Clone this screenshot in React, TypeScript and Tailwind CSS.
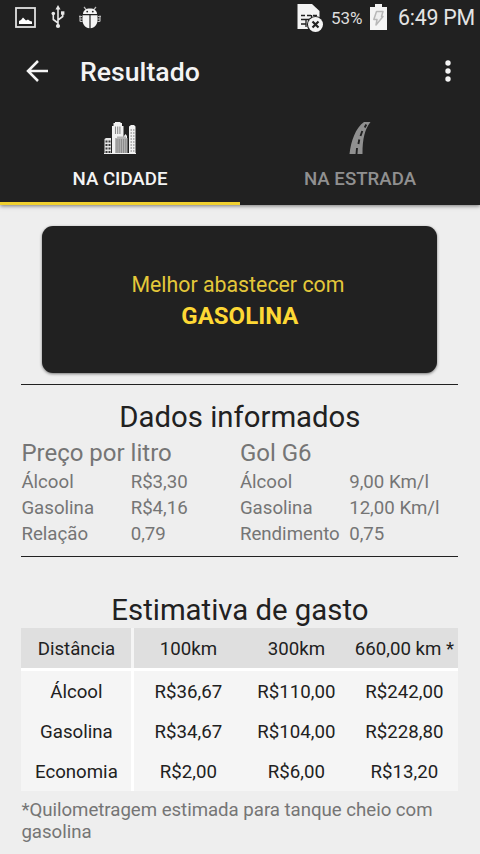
import { ReactNode } from "react";

const prices = [
  { label: "Álcool", value: "R$3,30" },
  { label: "Gasolina", value: "R$4,16" },
  { label: "Relação", value: "0,79" },
];

const consumption = [
  { label: "Álcool", value: "9,00 Km/l" },
  { label: "Gasolina", value: "12,00 Km/l" },
  { label: "Rendimento", value: "0,75" },
];

const distances = ["100km", "300km", "660,00 km *"];

const estimates = [
  { label: "Álcool", values: ["R$36,67", "R$110,00", "R$242,00"] },
  { label: "Gasolina", values: ["R$34,67", "R$104,00", "R$228,80"] },
  { label: "Economia", values: ["R$2,00", "R$6,00", "R$13,20"] },
];

function PictureIcon() {
  return (
    <svg width="21" height="21" viewBox="0 0 21 21">
      <rect x="1" y="1" width="19" height="19" fill="none" stroke="#e0e0e0" strokeWidth="1.800" />
      <path d="M4 17v-3l2-1 2-2.500 3 3 2-1 2 1.500 2 .5v2.500z" fill="#fff" />
    </svg>
  );
}

function UsbIcon() {
  return (
    <svg width="14" height="24" viewBox="0 0 14 24" fill="none" stroke="#e8e8e8" strokeWidth="1.600">
      <path d="M7 3v18M7 18L2.300 14.500V8.500M7 15l4.700-3.500V8" />
      <path d="M7 0l2.500 4.500h-5z" fill="#e8e8e8" stroke="none" />
      <circle cx="7" cy="21" r="2.100" fill="#e8e8e8" stroke="none" />
      <circle cx="2.300" cy="8.500" r="1.800" fill="#e8e8e8" stroke="none" />
      <path d="M10 6.300h3.400v3.400H10z" fill="#e8e8e8" stroke="none" />
    </svg>
  );
}

function BugIcon() {
  return (
    <svg width="24" height="23" viewBox="0 0 24 23">
      <path
        d="M6 1l2.500 3M18 1l-2.500 3M1 10.500h3M2 13h2.500M2 15.500h2.500M20 10.500h3M19.500 13H22M19.500 15.500H22M2 9.500v6M22 9.500v6"
        stroke="#b8b8b8"
        strokeWidth="1.200"
        fill="none"
      />
      <path d="M5 8C5 4.500 8 2.500 12 2.500S19 4.500 19 8z" fill="#f4f4f4" />
      <path d="M4.500 9.200h6.900v13C7.500 22 4.500 18.500 4.500 14zM12.600 9.200h6.900V14c0 4.500-3 8-6.900 8.200z" fill="#f4f4f4" />
      <circle cx="9.200" cy="5.600" r=".9" fill="#212121" />
      <circle cx="14.800" cy="5.600" r=".9" fill="#212121" />
    </svg>
  );
}

function SimIcon() {
  return (
    <svg width="27" height="30" viewBox="0 0 27 30">
      <path d="M.5 0h14.500l7.500 7v18H.5z" fill="#f4f4f4" />
      <path d="M4 11.500h4M10 11.500h4M16 11.500h4M4 15.500h15M4 20h4.500M9 15v8M14.500 11v5" stroke="#212121" strokeWidth="1.300" fill="none" />
      <circle cx="18.500" cy="20.500" r="8.600" fill="#212121" />
      <circle cx="18.500" cy="20.500" r="7.500" fill="#f4f4f4" />
      <path d="M15.500 17.500l6 6M21.500 17.500l-6 6" stroke="#212121" strokeWidth="2.200" />
    </svg>
  );
}

function BatteryIcon() {
  return (
    <svg width="17" height="27" viewBox="0 0 17 27">
      <path d="M5 0h7v3h5v23H0V3h5z" fill="#f4f4f4" />
      <path
        d="M6.500 7.500H13l-1.500 5H13L6 21l1-5.500H3.800z"
        fill="#eeeeee"
        stroke="#b8b8b8"
        strokeWidth="1.500"
        strokeLinejoin="round"
      />
    </svg>
  );
}

function CityIcon() {
  return (
    <svg width="32" height="34" viewBox="0 0 32 34">
      <path d="M8 33V5h1.500V2H11V1h5.500v1H18v3h1.500v28z" fill="#f2f2f2" />
      <path d="M11.500 5.500v7.500M13.700 5.500v7.500M15.900 5.500v7.500" stroke="#8a8a8a" strokeWidth="1.100" />
      <path d="M20 33V15l1.500-2 1.500 2v18z" fill="#f2f2f2" />
      <path d="M25 33V5.500L27 4h3l1.500 1.500V33z" fill="#f2f2f2" />
      <path
        d="M26.500 9h4M26.500 12h4M26.500 15h4M26.500 18h4M26.500 21h4M26.500 24h4M26.500 27h4M26.500 30h4"
        stroke="#777"
        strokeWidth="1.200"
        strokeDasharray="1.500 1"
      />
      <path d="M.5 33V18L2 17h5v16z" fill="#e6e6e6" />
      <path d="M1.500 20.500h5M1.500 24h5M1.500 27.500h5M1.500 31h5" stroke="#3c3c3c" strokeWidth="2" strokeDasharray="2 1" />
      {/* front block */}
      <path d="M11 33V17h2v-1.500h9V17h1.500v16z" fill="#b4b4b4" />
      <path d="M13 18v14M15.200 18v14M17.400 18v14M19.600 18v14M21.800 18v14" stroke="#888" strokeWidth="1" />
      <path d="M0 32.500h32" stroke="#f2f2f2" strokeWidth="1" />
    </svg>
  );
}

function RoadIcon() {
  return (
    <svg width="22" height="34" viewBox="0 0 22 34">
      <path d="M15 1h6.500C16 8 13.500 17 13.500 33H.5C2 20 6.500 7 15 1z" fill="#909090" />
      <path d="M17.300 3.500l-1.600 3M13.300 10l-1.800 5M10.300 18.500l-.9 4.500M8 27l-.5 6" stroke="#212121" strokeWidth="1.900" fill="none" />
    </svg>
  );
}

function Tab({ label, icon, active }: { label: string; icon: ReactNode; active?: boolean }) {
  return (
    <div
      className={`flex h-[97px] flex-col items-center border-b-[3px] ${
        active ? "border-[#f0d030] text-[#f4f4f4]" : "border-[#212121] text-[#909090]"
      }`}
    >
      <div className="mt-[13px] h-[34px]">{icon}</div>
      <span className="mt-[13px] text-[18.670px] leading-[22px] font-medium">{label}</span>
    </div>
  );
}

function InfoColumn({ title, rows }: { title: string; rows: { label: string; value: string }[] }) {
  return (
    <div className="whitespace-nowrap">
      <h3 className="text-[24px] leading-[32px]">{title}</h3>
      {rows.map((row) => (
        <div key={row.label} className="grid h-[26px] grid-cols-2 text-[18.670px] leading-[26px]">
          <span>{row.label}</span>
          <span>{row.value}</span>
        </div>
      ))}
    </div>
  );
}

export default function App() {
  return (
    <div className="flex h-[854px] w-[480px] flex-col overflow-hidden bg-[#eeeeee] font-[Roboto,sans-serif] text-[#212121]">
      <header className="shrink-0 bg-[#212121] text-[#f4f4f4] shadow-[0_1px_4px_rgba(0,0,0,0.5)]">
        <div className="flex h-[34px] items-center pr-[5px] pl-[15px]">
          <PictureIcon />
          <div className="ml-[15px]">
            <UsbIcon />
          </div>
          <div className="ml-[13px]">
            <BugIcon />
          </div>
          <div className="mt-[3px] ml-auto">
            <SimIcon />
          </div>
          <span className="mt-[2px] ml-[7px] w-[32px] text-[17px] leading-[20px] whitespace-nowrap text-[#dddddd]">53%</span>
          <div className="ml-[7px]">
            <BatteryIcon />
          </div>
          <span className="mt-[2px] ml-[11px] text-[21.330px] leading-[26px] tracking-[-0.200px] whitespace-nowrap text-[#e4e4e4]">6:49 PM</span>
        </div>

        <div className="flex h-[74px] items-center pr-[29px] pl-[26px]">
          <svg width="23" height="22" viewBox="0 0 23 22" fill="none" stroke="#f4f4f4" strokeWidth="2.500">
            <path d="M12 1L2 11l10 10M2 11h20" />
          </svg>
          <h1 className="mt-px ml-[31px] text-[26.670px] leading-[32px] font-medium">Resultado</h1>
          <svg className="ml-auto" width="6" height="22" viewBox="0 0 6 22" fill="#f4f4f4">
            <circle cx="3" cy="3" r="2.700" />
            <circle cx="3" cy="11" r="2.700" />
            <circle cx="3" cy="19" r="2.700" />
          </svg>
        </div>

        <div className="grid grid-cols-2">
          <Tab label="NA CIDADE" icon={<CityIcon />} active />
          <Tab label="NA ESTRADA" icon={<RoadIcon />} />
        </div>
      </header>

      <main className="pr-[21.600px] pl-[21.400px]">
        <section className="mx-[21px] mt-[21px] flex h-[147px] flex-col items-center justify-center rounded-[11px] bg-[#212121] pt-[5px] text-[#fdd835] shadow-[0_1px_3px_rgba(0,0,0,0.5)]">
          <p className="pr-[4px] text-[21.330px] leading-[28px] text-[#e4c83a]">Melhor abastecer com</p>
          <p className="text-[24px] leading-[34px] font-bold">GASOLINA</p>
        </section>

        <section className="mt-[11px] h-[173px] border-y border-[#212121] pt-[14px]">
          <h2 className="text-center text-[29.330px] leading-[36px]">Dados informados</h2>
          <div className="mt-[2px] grid grid-cols-2 text-[#757575]">
            <InfoColumn title="Preço por litro" rows={prices} />
            <InfoColumn title="Gol G6" rows={consumption} />
          </div>
        </section>

        <section className="mt-[35px]">
          <h2 className="text-center text-[29.330px] leading-[36px]">Estimativa de gasto</h2>
          <div className="grid grid-cols-[110px_1fr] gap-[3px] bg-[#f5f5f5] text-center text-[18.670px] leading-[42px] whitespace-nowrap">
            <div className="h-[40px] bg-[#dfdfdf]">Distância</div>
            <div className="grid h-[40px] grid-cols-3 bg-[#dfdfdf]">
              {distances.map((distance) => (
                <span key={distance}>{distance}</span>
              ))}
            </div>
          </div>
          <div className="border-t-[3px] border-white bg-white text-[18.670px] leading-[42px]">
            {estimates.map((row) => (
              <div key={row.label} className="grid h-[40px] grid-cols-[110px_1fr] gap-[3px] text-center">
                <div className="h-[40px] bg-[#f5f5f5]">{row.label}</div>
                <div className="grid h-[40px] grid-cols-3 bg-[#f5f5f5]">
                  {row.values.map((value) => (
                    <span key={value}>{value}</span>
                  ))}
                </div>
              </div>
            ))}
          </div>
          <p className="mt-[8px] text-[18.670px] leading-[22px] tracking-[-0.030px] text-[#757575]">
            *Quilometragem estimada para tanque cheio com gasolina
          </p>
        </section>
      </main>
    </div>
  );
}
